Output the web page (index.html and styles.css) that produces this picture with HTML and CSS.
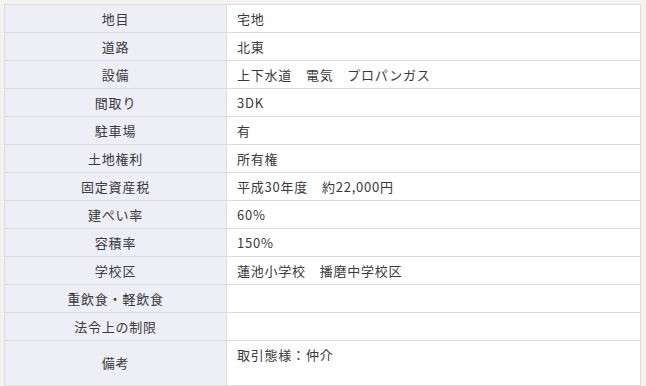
FILE: index.html
```html
<!DOCTYPE html>
<html lang="ja">
<head>
<meta charset="utf-8">
<link rel="stylesheet" href="styles.css">
</head>
<body>
<table class="spec">
<tbody>
<tr><th>地目</th><td>宅地</td></tr>
<tr><th>道路</th><td>北東</td></tr>
<tr><th>設備</th><td>上下水道　電気　プロパンガス</td></tr>
<tr><th>間取り</th><td>3DK</td></tr>
<tr><th>駐車場</th><td>有</td></tr>
<tr><th>土地権利</th><td>所有権</td></tr>
<tr><th>固定資産税</th><td>平成30年度　約22,000円</td></tr>
<tr><th>建ぺい率</th><td>60%</td></tr>
<tr><th>容積率</th><td>150%</td></tr>
<tr><th>学校区</th><td>蓮池小学校　播磨中学校区</td></tr>
<tr><th>重飲食・軽飲食</th><td></td></tr>
<tr><th>法令上の制限</th><td></td></tr>
<tr class="tall"><th>備考</th><td>取引態様：仲介</td></tr>
</tbody>
</table>
</body>
</html>
```
FILE: styles.css
```css
html, body {
  margin: 0;
  background: #f4f3ef;
}
body {
  padding: 4px 5px 0 4px;
  font-family: "Noto Sans CJK JP", "Noto Sans", sans-serif;
  font-size: 13px;
  color: #3a3a3a;
}
.spec {
  width: 637px;
  border-collapse: collapse;
  border: 1px solid #dcdcdc;
  table-layout: fixed;
}
.spec th,
.spec td {
  border: 1px solid #dcdcdc;
  height: 28px;
  padding: 0 10px;
  box-sizing: border-box;
  font-weight: normal;
  letter-spacing: 0.06em;
  line-height: 18px;
}
.spec th {
  width: 222px;
  background: #eeeef6;
  text-align: center;
  vertical-align: middle;
}
.spec td {
  background: #ffffff;
  text-align: left;
  vertical-align: middle;
}
.spec tr.tall th,
.spec tr.tall td {
  height: 45px;
}
.spec tr.tall td {
  vertical-align: top;
  padding-top: 5px;
}
```
